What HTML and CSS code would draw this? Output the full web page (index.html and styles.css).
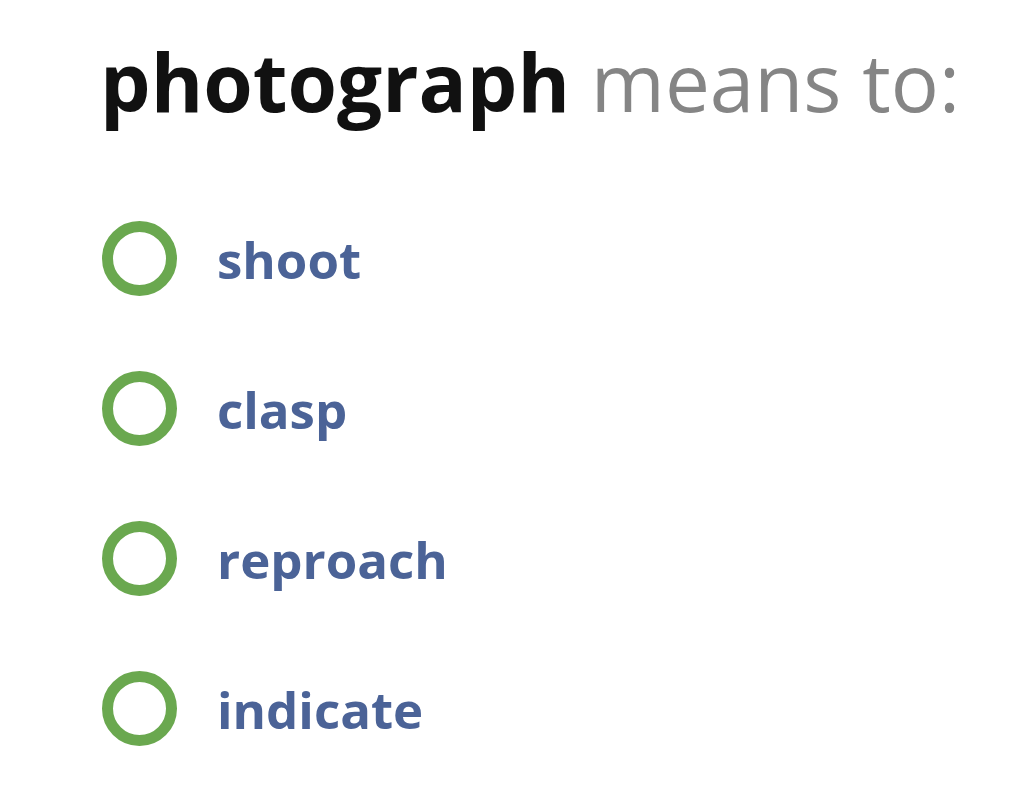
FILE: index.html
```html
<!DOCTYPE html>
<html lang="en">
<head>
  <meta charset="UTF-8">
  <title>Vocabulary question</title>
  <link rel="stylesheet" href="styles.css">
</head>
<body>
  <div class="question">
    <h1 class="prompt"><strong>photograph</strong> means to:</h1>

    <ul class="choices">
      <li class="choice"><span class="radio"></span><span class="word">shoot</span></li>
      <li class="choice"><span class="radio"></span><span class="word">clasp</span></li>
      <li class="choice"><span class="radio"></span><span class="word">reproach</span></li>
      <li class="choice"><span class="radio"></span><span class="word">indicate</span></li>
    </ul>
  </div>
</body>
</html>
```

FILE: styles.css
```css
body {
  margin: 0;
  padding: 0;
  font-family: 'Open Sans', sans-serif;
  background: #ffffff;
}

.question {
  padding: 27px 0 0 100px;
}

.prompt {
  margin: 0;
  font-size: 80px;
  font-weight: normal;
  line-height: 1.362;
  color: #858585;
  white-space: nowrap;
}

.prompt strong {
  font-weight: bold;
  color: #111111;
}

.choices {
  list-style: none;
  margin: 0;
  padding: 0;
  margin-top: 48px;
}

.choice {
  display: flex;
  align-items: center;
  height: 150px;
}

.radio {
  width: 53px;
  height: 53px;
  border: 11.5px solid #6aa84f;
  border-radius: 50%;
  margin-left: 2px;
  margin-right: 40px;
  flex-shrink: 0;
}

.word {
  font-size: 51px;
  font-weight: bold;
  color: #4b6397;
}
```
